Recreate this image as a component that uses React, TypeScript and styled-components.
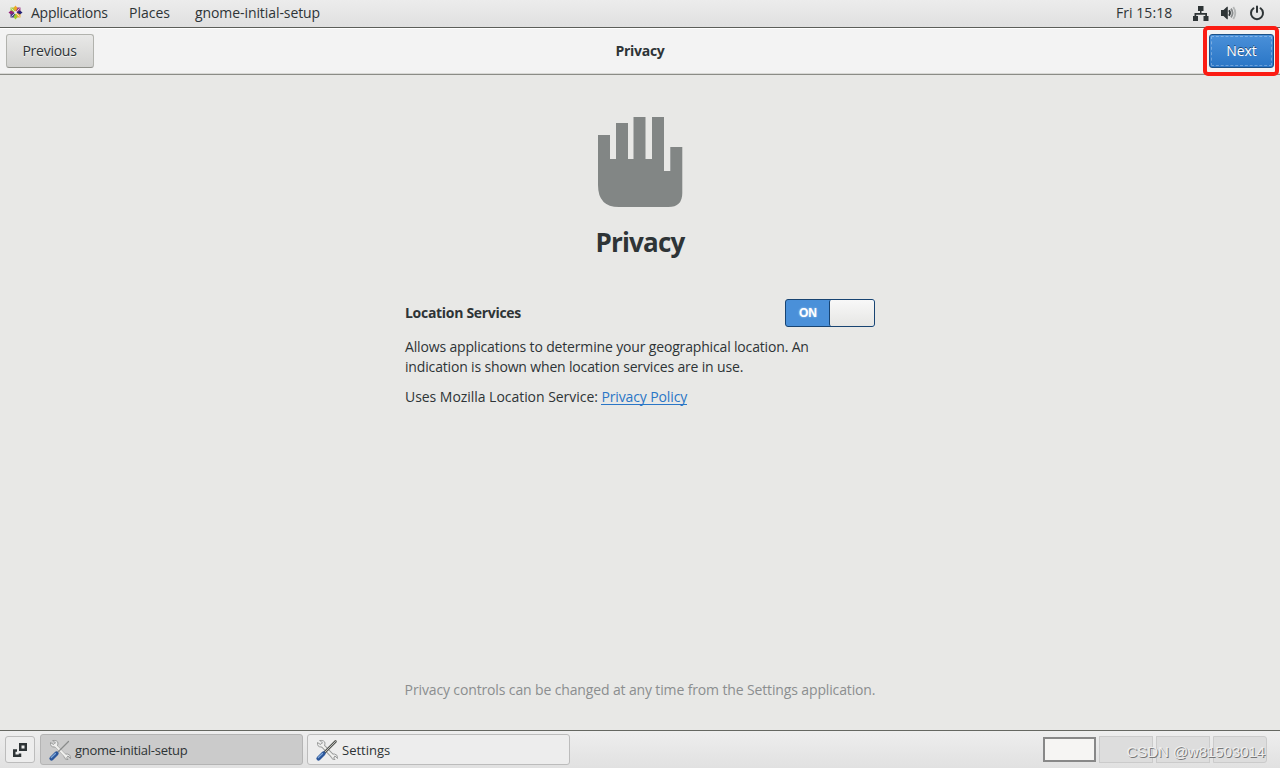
import React, { useState } from "react";
import styled, { createGlobalStyle, css } from "styled-components";

const GlobalStyle = createGlobalStyle`
  * { box-sizing: border-box; }
  body {
    margin: 0;
    font-family: "Open Sans", "Noto Sans", sans-serif;
    font-size: 14px;
    font-stretch: 90%;
    color: #2e3436;
  }
`;

const Screen = styled.div`
  width: 1280px;
  height: 768px;
  display: flex;
  flex-direction: column;
  background: #e8e8e6;
  overflow: hidden;
`;

const Label = styled.span<{ $spacing?: number }>`
  letter-spacing: ${(p) => p.$spacing ?? 0}px;
  white-space: nowrap;
`;

const TopBar = styled.header`
  height: 28px;
  flex: none;
  display: flex;
  align-items: center;
  justify-content: space-between;
  padding: 0 15px 2px 8px;
  background: linear-gradient(#ececec, #e0e0e0);
  border-bottom: 1px solid #5c5e59;
`;

const MenuItems = styled.nav`
  display: flex;
  align-items: center;
`;

const MenuItem = styled.div<{ $width: number }>`
  width: ${(p) => p.$width}px;
  display: flex;
  align-items: center;
  gap: 8px;
`;

const StatusArea = styled.div`
  display: flex;
  align-items: center;
`;

const Clock = styled.div`
  width: 77px;
`;

const StatusIcons = styled.div`
  display: flex;
  gap: 12px;
`;

const HeaderBar = styled.div`
  height: 47px;
  flex: none;
  display: grid;
  grid-template-columns: 1fr auto 1fr;
  align-items: center;
  padding: 0 6px 0 6px;
  background: #f3f3f3;
  border-bottom: 1px solid #8b8c86;
  box-shadow: inset 0 1px #fff, inset 0 -1px #d8d8d5;
`;

const Title = styled.h1`
  margin: 0 0 2px;
  font-size: 14px;
  font-weight: 700;
`;

const Button = styled.button<{ $primary?: boolean }>`
  height: 34px;
  width: 88px;
  padding: 0 1px 1px 0;
  font: inherit;
  color: #2e3436;
  border: 1px solid #b1b2ad;
  border-bottom-color: #91928c;
  border-radius: 3px;
  background: linear-gradient(#e8e8e7, #d2d2d0);
  text-shadow: 0 1px rgba(255, 255, 255, 0.7);
  ${(p) =>
    p.$primary &&
    css`
      width: 65px;
      padding-right: 0;
      color: #fff;
      border-color: #1c5187;
      background: linear-gradient(#4a90d9, #2a76c6);
      text-shadow: 0 -1px rgba(0, 0, 0, 0.5);
      outline: 1px dashed rgba(255, 255, 255, 0.3);
      outline-offset: -3px;
    `}
`;

const NextSlot = styled.div`
  justify-self: end;
  position: relative;
  display: flex;
`;

const Highlight = styled.div`
  position: absolute;
  inset: -8.5px -4.5px -7.5px -6.500px;
  border: 4px solid #fb1c13;
  border-radius: 5px;
  pointer-events: none;
`;

const Page = styled.main`
  flex: 1;
  display: flex;
  flex-direction: column;
  align-items: center;
  padding-top: 41px;
`;

const Heading = styled.h2`
  margin: 15px 0 0;
  height: 40px;
  line-height: 40px;
  font-size: 26px;
  font-weight: 700;
`;

const Settings = styled.section`
  width: 470px;
  margin-top: 37px;
  flex: 1;
`;

const SettingRow = styled.div`
  display: flex;
  align-items: center;
  justify-content: space-between;
  height: 28px;
  font-weight: 700;
`;

const SettingName = styled.div`
  padding-bottom: 2px;
`;

const Switch = styled.button`
  width: 90px;
  height: 28px;
  display: flex;
  padding: 0;
  border: 1px solid #184472;
  border-radius: 3px;
  background: #4a90d9;
`;

const SwitchText = styled.span`
  flex: 1;
  padding-left: 1px;
  font: 700 12px/26px "Liberation Sans", sans-serif;
  color: #fff;
  text-shadow: 0 0 2px rgba(255, 255, 255, 0.6);
`;

const Knob = styled.span`
  width: 45px;
  height: 26px;
  border-left: 1px solid #184472;
  border-radius: 2px;
  background: linear-gradient(#f8f8f8, #e6e6e4);
`;

const Paragraph = styled.p`
  margin: 10px 0 0;
  line-height: 20px;
`;

const Link = styled.a`
  color: #2a76c6;
  border-bottom: 1px solid #2a76c6;
  display: inline-block;
  line-height: 15px;
  letter-spacing: -0.13px;
`;

const Footnote = styled.p`
  margin: 0 0 30px;
  line-height: 20px;
  color: #8b8e8f;
`;

const Taskbar = styled.footer`
  height: 38px;
  flex: none;
  display: flex;
  align-items: center;
  padding: 0 13px 0 5px;
  background: linear-gradient(#eeeeee, #e1e1e1);
  border-top: 1px solid #656761;
`;

const ShowDesktop = styled.button`
  width: 30px;
  height: 27px;
  padding: 0;
  display: grid;
  place-items: center;
  border: 1px solid #bcbcbc;
  border-radius: 3px;
  background: #ededed;
  margin-right: 5px;
`;

const Task = styled.div<{ $active?: boolean }>`
  width: 263px;
  height: 31px;
  margin-right: 4px;
  padding-left: 7px;
  display: flex;
  align-items: center;
  gap: 3px;
  font-size: 13px;
  border: 1px solid ${(p) => (p.$active ? "#b4b4b4" : "#bcbcbc")};
  border-radius: 3px;
  background: ${(p) => (p.$active ? "#cbcbcb" : "#ededed")};
`;

const Workspaces = styled.div`
  position: relative;
  margin-left: auto;
  display: flex;
  gap: 3px;
`;

const Workspace = styled.div<{ $current?: boolean }>`
  width: 54px;
  height: 27px;
  border: 1px solid #cbcbcb;
  background: #dddddd;
  &:last-of-type { border-radius: 0 3px 3px 0; }
  ${(p) =>
    p.$current &&
    css`
      border: 2px solid #888;
      width: 53px;
      height: 25px;
      margin-top: 1px;
      background: #f6f5f3;
    `}
`;

const Watermark = styled.span`
  position: absolute;
  right: 2px;
  top: 7px;
  font: 15px/18px "Liberation Sans", sans-serif;
  letter-spacing: -0.07px;
  color: #eee;
  text-shadow: 1px 1px #777;
  white-space: nowrap;
`;

const quadrants = [
  { fill: "#9ccd2a", x: -5, y: -5 },
  { fill: "#932279", x: 0.5, y: -5 },
  { fill: "#262577", x: -5, y: 0.5 },
  { fill: "#efa724", x: 0.5, y: 0.5 },
];

const CentosIcon = () => (
  <svg width="15" height="15" viewBox="-7.5 -7.5 15 15">
    {quadrants.map((q) => (
      <rect key={q.fill} x={q.x} y={q.y} width="4.500" height="4.500" fill={q.fill} opacity="0.85" />
    ))}
    <path d="M0 -1L-2 -4.500L0 -7L2 -4.500Z" fill="#efa724" />
    <path d="M1 0L4.500 -2L7 0L4.500 2Z" fill="#262577" />
    <path d="M0 1L2 4.500L0 7L-2 4.500Z" fill="#9ccd2a" />
    <path d="M-1 0L-4.500 2L-7 0L-4.500 -2Z" fill="#932279" />
    <path d="M-4 -4L4 4M4 -4L-4 4" stroke="#f2e8ee" strokeWidth="0.800" />
  </svg>
);

const NetworkIcon = () => (
  <svg width="16" height="16" viewBox="0 0 16 16" fill="#2e3436">
    <path d="M5 1h5.500v5H8.500v2H14v3h1.500v5h-5v-5H12.300V9.700H3.200V11H5v5H0v-5h1.500V8H7V6H5z" />
  </svg>
);

const VolumeIcon = () => (
  <svg width="16" height="16" viewBox="0 0 16 16" fill="none">
    <path d="M0 5h2.500l3.500-3.200h.8v12.400H6L2.500 11H0z" fill="#2e3436" />
    <path d="M8 5.300q2 2.700 0 5.400" stroke="#2e3436" strokeWidth="1.800" />
    <path d="M10 3.600q3.200 4.400 0 8.800" stroke="#888b8c" strokeWidth="1.800" />
    <path d="M12.300 1.900q4 6.100 0 12.200" stroke="#b4b6b6" strokeWidth="1.800" />
  </svg>
);

const PowerIcon = () => (
  <svg width="16" height="16" viewBox="0 0 16 16" fill="none" stroke="#2e3436" strokeWidth="2" strokeLinecap="round">
    <path d="M4.500 3.300A6 6 0 1 0 11.500 3.300M8 1.500v5.500" />
  </svg>
);

const HandIcon = () => (
  <svg width="86" height="91" viewBox="0 0 86 91" fill="#828685">
    <path d="M1 19h12v24h6V7h12v36h5.500V1h12v42H55V1h12v54h6.300V31h12v46q0 14-14 14H22Q1 91 1 69z" />
  </svg>
);

const ToolsIcon = ({ faded }: { faded?: boolean }) => (
  <svg width="24" height="24" viewBox="0 0 24 24" fill="none" strokeLinecap="round">
    <path d="M7 7L18 18.500" stroke="#9a9c9b" strokeWidth={faded ? 3 : 4} />
    <path
      d="M5 2.500L7.500 5L5.500 6.500L2.500 4.500Q2 9 6 9Q10 9.500 10 5Q9.500 2 5 2.500M16 17.500Q16 22 20 21.500L18 19.500L20 18L22.500 20.500Q23 16.500 19.500 16Q16.500 15.500 16 17.500"
      fill="#ececec"
      stroke="#9a9c9b"
      strokeWidth="1"
    />
    <path d="M7 7L18 18.500" stroke="#f0f0ee" strokeWidth="2.200" />
    <path d="M9 15L20.500 3.500" stroke={faded ? "#8a8c8b" : "#555753"} strokeWidth={faded ? 1.2 : 2.6} />
    {!faded && <path d="M9.500 14.500L20.500 3.500" stroke="#c8cac6" strokeWidth="0.900" />}
    <path d="M3.500 20.500L8.500 15.500" stroke="#2c579b" strokeWidth="4.200" />
    <path d="M3.300 19.500L7.500 15.500" stroke="#7fa8d8" strokeWidth="1.200" />
  </svg>
);

const WindowsIcon = () => (
  <svg width="14" height="15" viewBox="0 0 14 15" fill="none" stroke="#2e3436" strokeWidth="2.500">
    <path d="M7.250 2.250h5.500v5.500h-5.500zM4 8.500H1.250V13.750H7V11.500" />
  </svg>
);

export default function App() {
  const [on, setOn] = useState(true);
  return (
    <>
      <GlobalStyle />
      <Screen>
        <TopBar>
          <MenuItems>
            <MenuItem $width={121}><CentosIcon /><Label $spacing={-0.25}>Applications</Label></MenuItem>
            <MenuItem $width={66}><Label>Places</Label></MenuItem>
            <MenuItem $width={130}><Label $spacing={-0.08}>gnome-initial-setup</Label></MenuItem>
          </MenuItems>
          <StatusArea>
            <Clock><Label $spacing={0.05}>Fri 15:18</Label></Clock>
            <StatusIcons><NetworkIcon /><VolumeIcon /><PowerIcon /></StatusIcons>
          </StatusArea>
        </TopBar>
        <HeaderBar>
          <Button><Label $spacing={-0.25}>Previous</Label></Button>
          <Title><Label $spacing={-0.28}>Privacy</Label></Title>
          <NextSlot>
            <Button $primary><Label>Next</Label></Button>
            <Highlight />
          </NextSlot>
        </HeaderBar>
        <Page>
          <HandIcon />
          <Heading><Label $spacing={-0.8}>Privacy</Label></Heading>
          <Settings>
            <SettingRow>
              <SettingName><Label $spacing={-0.3}>Location Services</Label></SettingName>
              <Switch role="switch" aria-checked={on} onClick={() => setOn(!on)}>
                <SwitchText>{on ? "ON" : "OFF"}</SwitchText>
                <Knob />
              </Switch>
            </SettingRow>
            <Paragraph>
              <Label $spacing={-0.16}>Allows applications to determine your geographical location. An</Label>
              <br />
              <Label $spacing={-0.16}>indication is shown when location services are in use.</Label>
            </Paragraph>
            <Paragraph>
              <Label $spacing={-0.04}>Uses Mozilla Location Service: <Link>Privacy Policy</Link></Label>
            </Paragraph>
          </Settings>
          <Footnote>
            <Label $spacing={-0.135}>Privacy controls can be changed at any time from the Settings application.</Label>
          </Footnote>
        </Page>
        <Taskbar>
          <ShowDesktop><WindowsIcon /></ShowDesktop>
          <Task $active><ToolsIcon faded /><Label $spacing={-0.27}>gnome-initial-setup</Label></Task>
          <Task><ToolsIcon /><Label>Settings</Label></Task>
          <Workspaces>
            <Workspace $current />
            <Workspace />
            <Workspace />
            <Workspace />
            <Watermark>CSDN @w81503014</Watermark>
          </Workspaces>
        </Taskbar>
      </Screen>
    </>
  );
}
